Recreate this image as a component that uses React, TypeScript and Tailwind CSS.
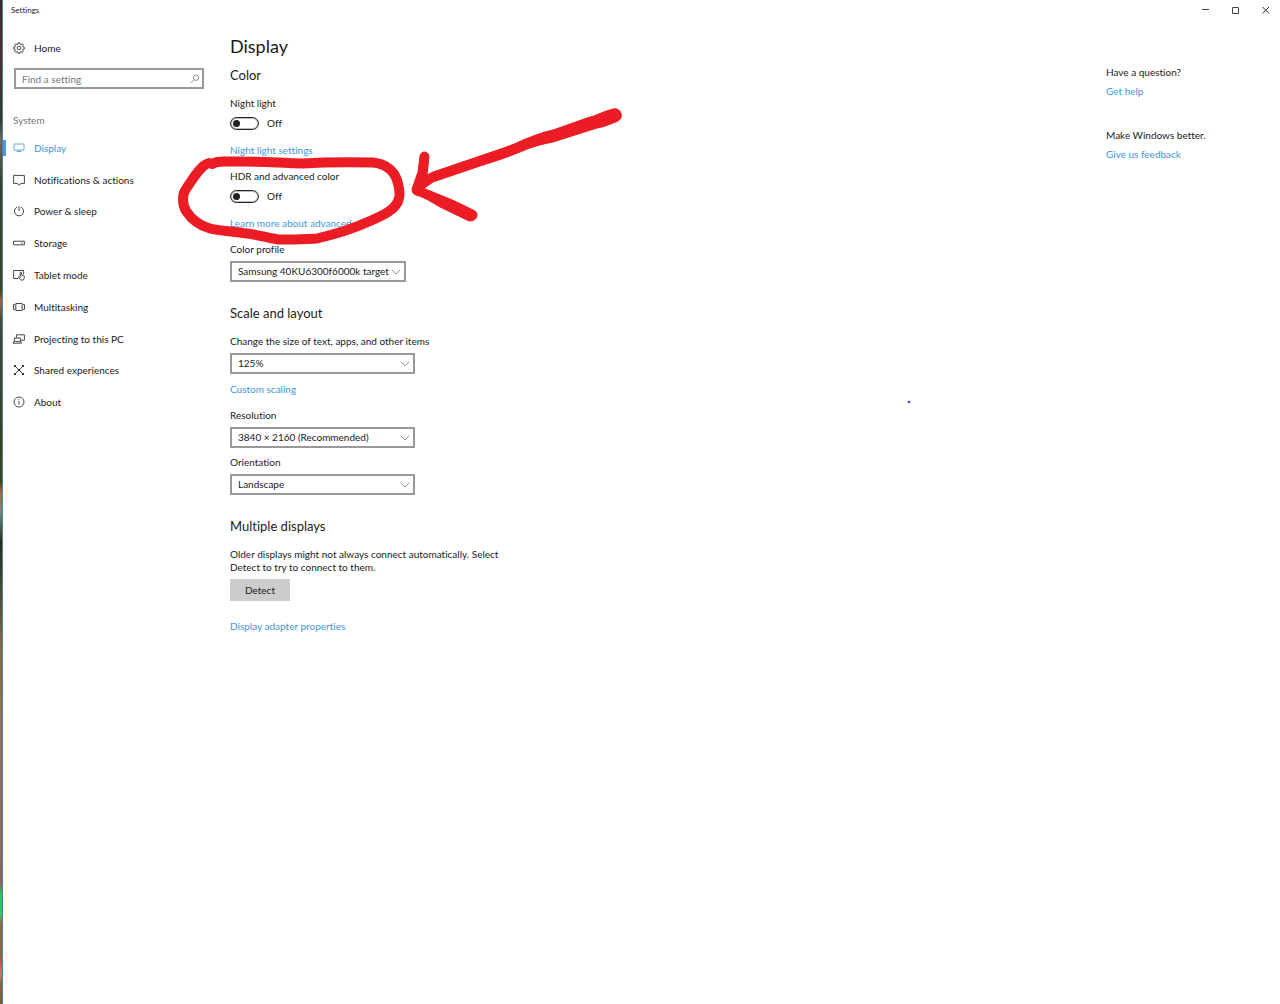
import React, { useState } from 'react';
import { ChevronDown } from 'lucide-react';

interface NavItem {
  id: string;
  label: string;
  icon: React.ReactNode;
}

const Glyph: React.FC<{ children: React.ReactNode }> = ({ children }) => (
  <svg
    viewBox="0 0 12 12"
    className="w-3 h-3 shrink-0"
    fill="none"
    stroke="currentColor"
    strokeWidth="0.8"
    aria-hidden="true"
  >
    {children}
  </svg>
);

const navItems: NavItem[] = [
  {
    id: 'display',
    label: 'Display',
    icon: <Glyph><path d="M1 2h10v6H1zM6 8v1.500M3.500 9.500h5" /></Glyph>,
  },
  {
    id: 'notifications',
    label: 'Notifications & actions',
    icon: <Glyph><path d="M.6 1.400h10.800v8H8L6 11.300 4.500 9.400H.6z" /></Glyph>,
  },
  {
    id: 'power',
    label: 'Power & sleep',
    icon: <Glyph><path d="M6 1v5M4 2.100a4.600 4.600 0 1 0 4 0" /></Glyph>,
  },
  {
    id: 'storage',
    label: 'Storage',
    icon: <Glyph><path d="M.6 4.200h10.800v3.600H.6zM8.400 6h1.400" /></Glyph>,
  },
  {
    id: 'tablet',
    label: 'Tablet mode',
    icon: (
      <Glyph>
        <path d="M5 9.500H.6v-8h10v4" />
        <path d="M7.200 8.600V3.800c0-.9 1.300-.9 1.300 0v2.400l2.200.5c.6.2.8.5.7 1.100l-.4 2c-.2.9-.7 1.400-1.600 1.400-1.300 0-2-.4-2.700-1.300L5.300 8.200c.5-.8 1.200-.3 1.900.4" />
      </Glyph>
    ),
  },
  {
    id: 'multitasking',
    label: 'Multitasking',
    icon: <Glyph><path d="M2.800 2.500h6.400v7H2.800zM1.900 3.600H.5v4.800h1.400M10.100 3.600h1.400v4.800h-1.400" /></Glyph>,
  },
  {
    id: 'projecting',
    label: 'Projecting to this PC',
    icon: <Glyph><path d="M3.400 4.800V1.800h8v5.400H8M1.400 5h6v3.600h-6zM0 10.200h8.400M8.400 8.600v1.600M.5 8.600v1.600" /></Glyph>,
  },
  {
    id: 'shared',
    label: 'Shared experiences',
    icon: (
      <Glyph>
        <path d="M2 2l8 8M10 2l-8 8" />
        <path d="M1 1.900h1.800M9.200 1.900H11M1 10.100h1.800M9.200 10.100H11M4.800 6h2.400" strokeWidth="1.700" />
      </Glyph>
    ),
  },
  {
    id: 'about',
    label: 'About',
    icon: <Glyph><circle cx="6" cy="6" r="5" /><path d="M6 5.200v3.400M6 3.300v1" /></Glyph>,
  },
];

const Toggle: React.FC<{ id: string; label: string }> = ({ id, label }) => {
  const [on, setOn] = useState(false);

  return (
    <div>
      <label htmlFor={id} className="block">{label}</label>
      <div className="mt-1.5 flex items-center gap-2 h-3.5">
        <span className="relative flex w-[29px] h-[13px]">
          <input
            id={id}
            type="checkbox"
            role="switch"
            checked={on}
            onChange={() => setOn(!on)}
            className="peer w-full h-full appearance-none rounded-full border border-[#222] ring-1 ring-inset ring-[#222]/30 checked:bg-[#4a9be0]"
          />
          <span className="pointer-events-none absolute left-[3px] top-[3px] w-[7px] h-[7px] rounded-full bg-[#222] peer-checked:left-[19px] peer-checked:bg-white" />
        </span>
        <span>{on ? 'On' : 'Off'}</span>
      </div>
    </div>
  );
};

interface PickerProps {
  id: string;
  label: string;
  options: string[];
  narrow?: boolean;
}

const Picker: React.FC<PickerProps> = ({ id, label, options, narrow }) => (
  <div>
    <label htmlFor={id} className="block">{label}</label>
    <div className={`relative mt-[5px] ${narrow ? 'w-44' : 'w-[185px]'}`}>
      <select
        id={id}
        className="block w-full h-[21px] appearance-none border-2 border-[#999] bg-white pb-0.5 pl-1.5 pr-3.5 leading-[14px]"
      >
        {options.map((option) => (
          <option key={option}>{option}</option>
        ))}
      </select>
      <ChevronDown className="pointer-events-none absolute right-0.5 top-[3px] w-4 h-4 text-[#777]" strokeWidth={1.2} />
    </div>
  </div>
);

const TextLink: React.FC<{ children: React.ReactNode }> = ({ children }) => (
  <a href="#" className="block w-fit text-[#4197d8]">{children}</a>
);

const SectionTitle: React.FC<{ children: React.ReactNode }> = ({ children }) => (
  <h2 className="text-[13px] leading-5">{children}</h2>
);

// Hand-drawn marker strokes and the pen dot
const Markup: React.FC = () => (
  <svg
    className="pointer-events-none absolute left-0 top-0 z-10"
    width="920"
    height="420"
    viewBox="0 0 920 420"
    aria-hidden="true"
  >
    <path
      d="M212 164C218 160 224 162 232 161.500C262 161 278 163 303 163.500C325 162 350 162 373 162.500C386 164 394 171 397 180C399 187 400 195 399 198C397 209 384 215 370 221C355 228 336 234 317 238.500C304 239 292 240 278 239.500C268 238 256 234 243 233C230 231 220 231 210 228.500C197 225 190 217 186 211C182 204 182 194 186 189C194 177 201 165 209 163"
      fill="none"
      stroke="#ec1c24"
      strokeWidth="10"
      strokeLinecap="round"
      strokeLinejoin="round"
    />
    <path
      d="M613 109C604 111 596 116 587 118L553 130C543 132 533 136 523 140C513 145 498 150 483 155L433 172L427 175L429 157C429 151 421 150 420 156L418 172L412 189C412 192 413 194 416 195C426 198 433 203 440 207L468 220.500C475 223 480 215 475 211C467 207 459 203 450 199L424 188.500L433 182L483 165C496 161 508 157 520 152C531 147 542 144 553 142L597 128C604 127 610 124 617 121.500C625 118 621 107 613 109Z"
      fill="#ec1c24"
      stroke="#ec1c24"
      strokeLinejoin="round"
    />
    <circle cx="909" cy="402" r="1.300" fill="#3f48cc" />
  </svg>
);

export default function App() {
  const [active, setActive] = useState('display');

  return (
    <div className="relative flex min-h-screen bg-white font-[Lato,'Open_Sans',sans-serif] text-[10px] leading-[14px] text-[#1a1a1a] [font-variant-ligatures:none]">
      {/* Sliver of the desktop behind the window */}
      <div className="w-[3px] shrink-0 border-r border-[#4a7fa5] bg-[linear-gradient(to_bottom,#3a2a2a_0%,#4a3030_5%,#2d3a30_12%,#6a6a60_14%,#33402f_18%,#3a4428_29%,#b0622c_30%,#3a4a44_32%,#35401f_44%,#3a4424_48%,#b8622e_49%,#6f8a84_51%,#20301f_54%,#3c4630_58%,#7c6a48_64%,#8e7548_72%,#8a6c40_88%,#2fc44a_89%,#37c956_91%,#8a6c48_92%,#8a6444_95%,#e04a50_96%,#d87070_97%,#8a6444_98%,#7a5a3c_100%)]" />

      <div className="flex min-w-0 flex-1 flex-col">
        <header className="flex h-5 items-center justify-between pl-2">
          <span className="text-[8px]">Settings</span>
          <div className="flex">
            <button aria-label="Minimize" className="flex h-5 w-[30px] items-center justify-center">
              <svg viewBox="0 0 10 10" className="w-2.5 h-2.5" stroke="#444" fill="none"><path d="M2 4.500h7" /></svg>
            </button>
            <button aria-label="Maximize" className="flex h-5 w-[30px] items-center justify-center">
              <svg viewBox="0 0 10 10" className="w-2.5 h-2.5" stroke="#444" fill="none"><path d="M2.500 2.500h6v6h-6z" /></svg>
            </button>
            <button aria-label="Close" className="flex h-5 w-[30px] items-center justify-center">
              <svg viewBox="0 0 10 10" className="w-2.5 h-2.5" stroke="#333" fill="none"><path d="M2.500 2l6.500 6.500M9 2l-6.500 6.500" /></svg>
            </button>
          </div>
        </header>

        <div className="flex flex-1">
          <nav className="w-[201px] shrink-0 pt-5">
            <a href="#" className="flex h-4 items-center gap-[9px] pl-2.5">
              <Glyph>
                <path d="M5.200.8h1.600l.3 1.400 1 .4 1.200-.8 1.100 1.100-.8 1.200.4 1 1.400.3v1.400l-1.400.3-.4 1 .8 1.200-1.100 1.100-1.200-.8-1 .4-.3 1.400H5.200l-.3-1.400-1-.4-1.200.8-1.100-1.100.8-1.200-.4-1L.6 6.800V5.400L2 5.100l.4-1-.8-1.200 1.100-1.100 1.200.8 1-.4z" />
                <circle cx="6" cy="6" r="1.800" />
              </Glyph>
              Home
            </a>

            <div className="relative mt-3 ml-[11px]">
              <input
                type="search"
                aria-label="Find a setting"
                placeholder="Find a setting"
                className="block w-full h-[21px] appearance-none border-2 border-[#999] pl-1.5 pr-5 placeholder:text-[#767676]"
              />
              <svg
                viewBox="0 0 10 10"
                className="pointer-events-none absolute right-1 top-1.5 w-2.5 h-2.5"
                fill="none"
                stroke="#888"
                strokeWidth="0.9"
                aria-hidden="true"
              >
                <circle cx="6" cy="3.700" r="2.700" />
                <path d="M4 5.700L.8 9" />
              </svg>
            </div>

            <h3 className="mt-6 pl-2.5 text-[#777]">System</h3>

            <ul className="mt-[5px] flex h-[286px] flex-col">
              {navItems.map((item) => {
                const isActive = active === item.id;

                return (
                  <li key={item.id} className="flex flex-1">
                    <button
                      onClick={() => setActive(item.id)}
                      className={`relative flex flex-1 items-center gap-[9px] pl-2.5 text-left ${isActive ? 'text-[#4197d8]' : ''}`}
                    >
                      {isActive && <span className="absolute left-0 w-[3px] h-4 bg-[#4a97e6]" />}
                      {item.icon}
                      {item.label}
                    </button>
                  </li>
                );
              })}
            </ul>
          </nav>

          <main className="min-w-0 flex-1 pl-[26px] pt-3.5">
            <h1 className="text-[18px] leading-6">Display</h1>

            <section className="mt-[7px]">
              <SectionTitle>Color</SectionTitle>
              <div className="mt-[11px] flex flex-col gap-3">
                <div className="flex flex-col gap-[13px]">
                  <Toggle id="night-light" label="Night light" />
                  <TextLink>Night light settings</TextLink>
                </div>
                <div className="flex flex-col gap-[13px]">
                  <Toggle id="hdr" label="HDR and advanced color" />
                  <TextLink>Learn more about advanced c</TextLink>
                </div>
                <Picker id="profile" label="Color profile" options={['Samsung 40KU6300f6000k target']} narrow />
              </div>
            </section>

            <section className="mt-[21px]">
              <SectionTitle>Scale and layout</SectionTitle>
              <div className="mt-[11px] flex flex-col gap-2">
                <Picker
                  id="scale"
                  label="Change the size of text, apps, and other items"
                  options={['125%', '100%', '150%']}
                />
                <TextLink>Custom scaling</TextLink>
              </div>
              <div className="mt-3 flex flex-col gap-[7px]">
                <Picker id="resolution" label="Resolution" options={['3840 × 2160 (Recommended)', '1920 × 1080']} />
                <Picker id="orientation" label="Orientation" options={['Landscape', 'Portrait']} />
              </div>
            </section>

            <section className="mt-[21px]">
              <SectionTitle>Multiple displays</SectionTitle>
              <p className="mt-3 max-w-[285px] leading-[13px]">
                Older displays might not always connect automatically. Select
                <br />
                Detect to try to connect to them.
              </p>
              <button className="mt-[5px] block w-[60px] h-[22px] bg-[#ccc]">Detect</button>
              <div className="mt-[18px]">
                <TextLink>Display adapter properties</TextLink>
              </div>
            </section>
          </main>

          <aside className="w-[174px] shrink-0 pt-[45px]">
            <p>Have a question?</p>
            <div className="mt-[5px]"><TextLink>Get help</TextLink></div>
            <p className="mt-[30px]">Make Windows better.</p>
            <div className="mt-[5px]"><TextLink>Give us feedback</TextLink></div>
          </aside>
        </div>
      </div>

      <Markup />
    </div>
  );
}
